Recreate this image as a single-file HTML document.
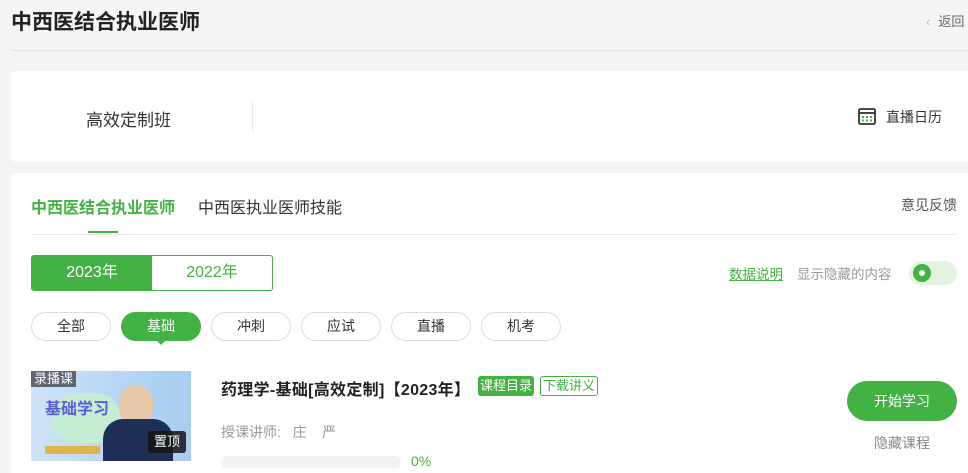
<!DOCTYPE html><html><head><meta charset="utf-8"><style>
*{margin:0;padding:0;box-sizing:border-box}
body{width:968px;height:472px;overflow:hidden;background:#f5f5f5;font-family:"Liberation Sans","Noto Sans CJK SC",sans-serif;position:relative;color:#333}
.a{position:absolute;white-space:nowrap}
.g{color:#43b244}
.pill{position:absolute;top:312px;width:80px;height:29px;border:1px solid #ddd;border-radius:15px;background:#fff;font-size:14px;text-align:center;line-height:27px;color:#333}
</style></head><body>
<div class="a" style="left:11px;top:6px;font-size:21px;font-weight:bold;color:#222">中西医结合执业医师</div>
<div class="a" style="left:926px;top:11px;font-size:13px;color:#666"><span style="color:#bbb;margin-right:8px">&lsaquo;</span>返回</div>
<div class="a" style="left:11px;top:50px;width:957px;height:1px;background:#e2e2e2"></div>
<div class="a" style="left:11px;top:71px;width:957px;height:91px;background:#fff;border-radius:6px 0 0 6px"></div>
<div class="a" style="left:86px;top:106px;font-size:17px;color:#333">高效定制班</div>
<div class="a" style="left:252px;top:101px;width:1px;height:31px;background:#e8e8e8"></div>
<svg class="a" style="left:858px;top:108px" width="18" height="17" viewBox="0 0 18 17"><rect x="1" y="1" width="16" height="15" rx="1.5" fill="none" stroke="#333" stroke-width="1.8"/><line x1="1" y1="5" x2="17" y2="5" stroke="#333" stroke-width="1.8"/><g fill="#43b244"><rect x="4" y="8" width="2" height="2"/><rect x="8" y="8" width="2" height="2"/><rect x="12" y="8" width="2" height="2"/><rect x="4" y="11.5" width="2" height="2"/><rect x="8" y="11.5" width="2" height="2"/><rect x="12" y="11.5" width="2" height="2"/></g></svg>
<div class="a" style="left:886px;top:107px;font-size:14px;color:#333">直播日历</div>
<div class="a" style="left:11px;top:173px;width:957px;height:300px;background:#fff;border-radius:6px 0 0 0"></div>
<div class="a g" style="left:31px;top:194px;font-size:16px;font-weight:bold">中西医结合执业医师</div>
<div class="a" style="left:198px;top:194px;font-size:16px;color:#333">中西医执业医师技能</div>
<div class="a" style="left:901px;top:195px;font-size:14px;color:#555">意见反馈</div>
<div class="a" style="left:88px;top:231px;width:30px;height:2px;background:#43b244"></div>
<div class="a" style="left:31px;top:234px;width:926px;height:1px;background:#ebebeb"></div>
<div class="a" style="left:31px;top:255px;width:242px;height:36px;border:1px solid #43b244;border-radius:3px;overflow:hidden;font-size:16px;line-height:34px">
<div class="a" style="left:0;top:0;width:120px;height:34px;background:#43b244;color:#fff;text-align:center">2023年</div>
<div class="a g" style="left:120px;top:0;width:120px;text-align:center">2022年</div></div>
<div class="a g" style="left:729px;top:263px;font-size:13.5px;text-decoration:underline">数据说明</div>
<div class="a" style="left:797px;top:263px;font-size:13.5px;color:#999">显示隐藏的内容</div>
<div class="a" style="left:909px;top:261px;width:48px;height:24px;border-radius:12px;background:#e3f4e1"></div>
<div class="a" style="left:913px;top:264px;width:18px;height:18px;border-radius:9px;background:#43b244"></div>
<div class="a" style="left:919px;top:270px;width:6px;height:6px;border-radius:3px;background:#fff"></div>
<div class="pill" style="left:31px">全部</div>
<div class="pill" style="left:121px;background:#43b244;border-color:#43b244;color:#fff">基础</div>
<div class="a" style="left:156px;top:340px;border:5px solid transparent;border-top-color:#43b244"></div>
<div class="pill" style="left:211px">冲刺</div>
<div class="pill" style="left:301px">应试</div>
<div class="pill" style="left:391px">直播</div>
<div class="pill" style="left:481px">机考</div>
<div class="a" style="left:31px;top:371px;width:160px;height:90px;background:linear-gradient(90deg,#cfe3f7,#b9d8f5 50%,#a8cdef);overflow:hidden">
<div class="a" style="left:20px;top:22px;width:70px;height:50px;border-radius:30px;background:#c6ecd4"></div>
<div class="a" style="left:14px;top:24px;font-size:16px;font-weight:bold;color:#5b5fd6">基础学习</div>
<div class="a" style="left:14px;top:75px;width:55px;height:8px;background:#e3b34a;border-radius:2px"></div>
<div class="a" style="left:88px;top:14px;width:34px;height:40px;border-radius:17px;background:#e9c7a9"></div>
<div class="a" style="left:72px;top:48px;width:70px;height:50px;border-radius:20px 20px 0 0;background:#1f2e55"></div>
<div class="a" style="left:0;top:0;padding:0 3px;height:16px;background:rgba(70,70,80,.8);color:#fff;font-size:13px;line-height:16px">录播课</div>
<div class="a" style="left:117px;top:60px;width:38px;height:22px;background:rgba(20,20,20,.85);border-radius:3px;color:#fff;font-size:13px;line-height:22px;text-align:center">置顶</div>
</div>
<div class="a" style="left:221px;top:376px;font-size:16px;font-weight:bold;color:#222;letter-spacing:0.3px">药理学-基础[高效定制]【2023年】</div>
<div class="a" style="left:478px;top:376px;width:56px;height:20px;background:#43b244;border-radius:3px;color:#fff;font-size:13px;line-height:20px;text-align:center">课程目录</div>
<div class="a g" style="left:540px;top:376px;width:58px;height:20px;border:1px solid #43b244;border-radius:3px;font-size:13px;line-height:18px;text-align:center">下载讲义</div>
<div class="a" style="left:221px;top:422px;font-size:14px;color:#999">授课讲师:&nbsp;&nbsp;&nbsp;庄&nbsp;&nbsp;&nbsp;&nbsp;严</div>
<div class="a" style="left:221px;top:456px;width:180px;height:12px;background:#f3f3f3;border-radius:6px"></div>
<div class="a g" style="left:411px;top:453px;font-size:14px">0%</div>
<div class="a" style="left:847px;top:381px;width:110px;height:40px;border-radius:20px;background:#43b244;color:#fff;font-size:14px;text-align:center;line-height:40px">开始学习</div>
<div class="a" style="left:874px;top:433px;font-size:14px;color:#888">隐藏课程</div>
</body></html>
